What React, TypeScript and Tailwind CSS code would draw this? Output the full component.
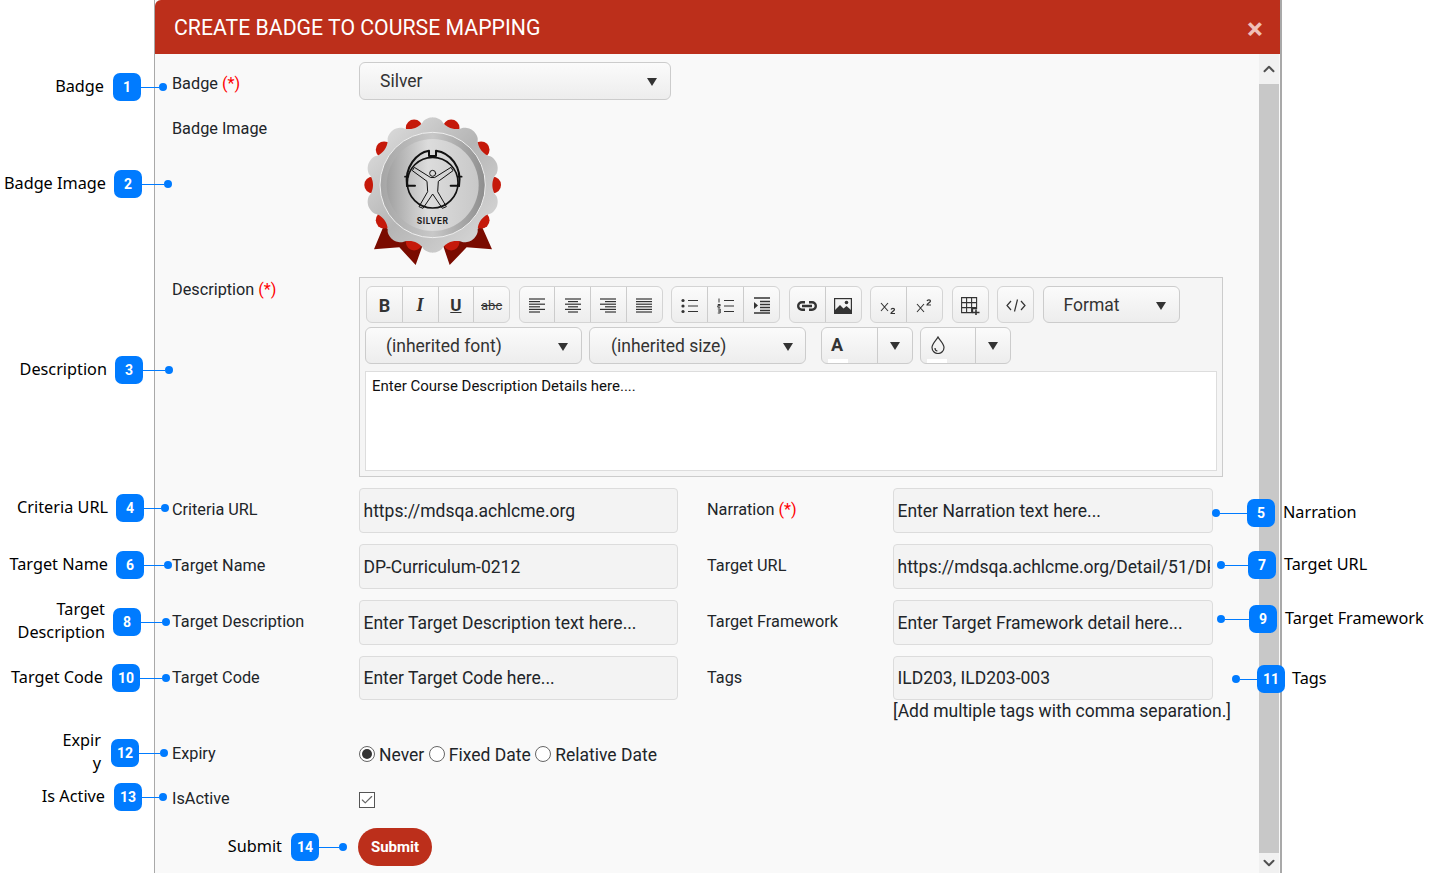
import { ReactNode } from "react";
import { Check, ChevronDown, ChevronUp } from "lucide-react";

const LABEL_FONT = "font-['Noto_Sans',sans-serif] text-[16.25px] leading-[23px] text-black";

// ---- callouts that sit over the form ----
type CalloutProps = {
    n: number
    label: ReactNode
    pos: string
    line: string
    gap: string
    side: "left" | "right"
}

const NumberBadge = ({ n }: { n: number }) => (
    <span className="flex h-7 w-7 shrink-0 items-center justify-center rounded-[7px] bg-[#007bff] text-[14px] font-bold text-white">{n}</span>
)

const Dot = () => <span className="h-2 w-2 shrink-0 rounded-full bg-[#007bff]" />

function Callout({ n, label, pos, line, gap, side }: CalloutProps) {
    const connector = <span className={`h-px shrink-0 bg-[#007bff] ${line}`} />
    const text = <span className={`${LABEL_FONT} ${gap} -mt-[2px] whitespace-nowrap`}>{label}</span>
    return (
        <div className={`absolute z-10 flex h-7 items-center ${pos}`}>
            {side === "left" ? (
                <>
                    {text}
                    <NumberBadge n={n} />
                    {connector}
                    <Dot />
                </>
            ) : (
                <>
                    <Dot />
                    {connector}
                    <NumberBadge n={n} />
                    {text}
                </>
            )}
        </div>
    )
}

const callouts: CalloutProps[] = [
    { n: 1, label: "Badge", pos: "right-[1265px] top-[73px]", line: "w-[18px]", gap: "mr-[9px]", side: "left" },
    { n: 2, label: "Badge Image", pos: "right-[1260px] top-[170px]", line: "w-[22px]", gap: "mr-[8px]", side: "left" },
    { n: 3, label: "Description", pos: "right-[1259px] top-[356px]", line: "w-[22px]", gap: "mr-[8px]", side: "left" },
    { n: 4, label: "Criteria URL", pos: "right-[1263px] top-[494px]", line: "w-[17px]", gap: "mr-[8px]", side: "left" },
    { n: 6, label: "Target Name", pos: "right-[1260px] top-[551px]", line: "w-[20px]", gap: "mr-[8px]", side: "left" },
    { n: 8, label: <span className="block text-right">Target<br />Description</span>, pos: "right-[1262px] top-[608px]", line: "w-[21px]", gap: "mr-[8px]", side: "left" },
    { n: 10, label: "Target Code", pos: "right-[1262px] top-[664px]", line: "w-[22px]", gap: "mr-[9px]", side: "left" },
    { n: 12, label: <span className="block text-right">Expir<br />y</span>, pos: "right-[1264px] top-[739px]", line: "w-[21px]", gap: "mr-[10px]", side: "left" },
    { n: 13, label: "Is Active", pos: "right-[1265px] top-[783px]", line: "w-[17px]", gap: "mr-[9px]", side: "left" },
    { n: 14, label: "Submit", pos: "right-[1085px] top-[833px]", line: "w-[20px]", gap: "mr-[9px]", side: "left" },
    { n: 5, label: "Narration", pos: "left-[1212px] top-[499px]", line: "w-[27px]", gap: "ml-[8px]", side: "right" },
    { n: 7, label: "Target URL", pos: "left-[1217px] top-[551px]", line: "w-[23px]", gap: "ml-[8px]", side: "right" },
    { n: 9, label: "Target Framework", pos: "left-[1217px] top-[605px]", line: "w-[24px]", gap: "ml-[8px]", side: "right" },
    { n: 11, label: "Tags", pos: "left-[1232px] top-[665px]", line: "w-[17px]", gap: "ml-[7px]", side: "right" },
]

// ---- the silver badge drawing, in 3x coordinates ----
const scallop = Array.from({ length: 360 }, (_, i) => {
    const a = (i * Math.PI) / 180
    const c = Math.cos(10 * a)
    const r = 191 + 12 * Math.sign(c) * Math.pow(Math.abs(c), 0.7)
    return `${(233 + r * Math.sin(a)).toFixed(1)},${(225 - r * Math.cos(a)).toFixed(1)}`
}).join(" ")

const redLobes = [18, 54, 90, 126, 162, 198, 234, 270, 306, 342].map((deg) => {
    const a = (deg * Math.PI) / 180
    return { cx: 233 + 180 * Math.sin(a), cy: 225 - 180 * Math.cos(a) }
})

function SilverBadge() {
    return (
        <svg viewBox="0 0 480 480" className="-mt-[6px] -ml-[4px] h-40 w-40">
            <defs>
                <linearGradient id="rim" x1="0" y1="0" x2="1" y2="1">
                    <stop offset="0" stopColor="#e4e4e4" />
                    <stop offset="0.5" stopColor="#b5b5b5" />
                    <stop offset="1" stopColor="#dedede" />
                </linearGradient>
                <linearGradient id="ring" x1="0" y1="0.5" x2="1" y2="0.5">
                    <stop offset="0" stopColor="#a5a5a5" />
                    <stop offset="0.5" stopColor="#c8c8c8" />
                    <stop offset="1" stopColor="#8d8d8d" />
                </linearGradient>
                <linearGradient id="disc" x1="0" y1="0.5" x2="1" y2="0.5">
                    <stop offset="0" stopColor="#a0a0a0" />
                    <stop offset="0.45" stopColor="#dcdcdc" />
                    <stop offset="1" stopColor="#c8c8c8" />
                </linearGradient>
            </defs>
            <polygon points="85,350 57,418 133,412 182,465 205,400" fill="#7a0b00" />
            <polygon points="381,350 411,418 335,412 284,465 262,400" fill="#7a0b00" />
            {redLobes.map((l, i) => <circle key={i} cx={l.cx} cy={l.cy} r="25" fill="#c5190a" />)}
            <polygon points={scallop} fill="url(#rim)" />
            <circle cx="233" cy="225" r="158" fill="url(#ring)" stroke="#efefef" strokeWidth="3" />
            <circle cx="233" cy="225" r="138" fill="url(#disc)" />
            <g fill="none" stroke="#111" strokeWidth="5" strokeLinejoin="round" strokeLinecap="round">
                <path d="M156 228 C148 170 185 128 222 122 L222 138 L243 138 L243 122 C285 128 322 170 312 228" strokeWidth="6" />
                <path d="M150 200 L160 200 M310 200 L320 200" />
                <circle cx="233" cy="218" r="76" />
                <path d="M157 227 H180 M287 227 H310" strokeWidth="6" />
                <circle cx="233" cy="190" r="9" strokeWidth="3" />
                <path d="M226 202 L178 172 L172 182 L216 214 L218 245 L192 290 L204 295 L233 252 L262 295 L274 290 L248 245 L250 214 L294 182 L288 172 L240 202 Z" strokeWidth="3" />
            </g>
            <text x="233" y="341" textAnchor="middle" fontFamily="Inter, sans-serif" fontWeight="700" fontSize="25" letterSpacing="1.5" fill="#1c1c1c">SILVER</text>
        </svg>
    )
}

// ---- toolbar ----
const Caret = () => (
    <svg viewBox="0 0 10 8" className="mt-px h-[8px] w-[10px] shrink-0" fill="#333"><path d="M0 0h10L5 8z" /></svg>
)

const BTN_BG = "bg-linear-to-b from-[#fbfbfb] to-[#ededed]"

function ToolGroup({ children, width }: { children: ReactNode, width: string }) {
    return <div className={`flex h-[37px] divide-x divide-[#ccc] rounded-md border border-[#d4d4d4] ${BTN_BG} ${width}`}>{children}</div>
}

const Tool = ({ children }: { children: ReactNode }) => (
    <span className="flex h-full flex-1 items-center justify-center pt-[2px] text-[#333]">{children}</span>
)

const Lines = ({ rows }: { rows: [number, number][] }) => (
    <svg viewBox="0 0 16 15" className="h-[15px] w-4" stroke="#333" strokeWidth="1.2">
        {rows.map(([x1, x2], i) => <line key={i} x1={x1} x2={x2} y1={1 + i * 2.6} y2={1 + i * 2.6} />)}
    </svg>
)

function SelectBox({ label, className }: { label: string, className: string }) {
    return (
        <div className={`flex items-center justify-between rounded-md border border-[#ccc] ${BTN_BG} ${className}`}>
            <span className="text-[#333]">{label}</span>
            <Caret />
        </div>
    )
}

function Toolbar() {
    return (
        <div className="flex flex-col">
            <div className="flex h-[37px] gap-[8.5px] pl-[6px]">
                <ToolGroup width="w-[144px]">
                    <Tool><span className="text-[18px] font-bold">B</span></Tool>
                    <Tool><span className="font-['Liberation_Serif',serif] text-[18px] font-bold italic">I</span></Tool>
                    <Tool><span className="text-[17px] font-bold underline">U</span></Tool>
                    <Tool><span className="text-[13px] line-through">abc</span></Tool>
                </ToolGroup>
                <ToolGroup width="w-[144px]">
                    <Tool><Lines rows={[[0, 16], [0, 11], [0, 16], [0, 11], [0, 16], [0, 11]]} /></Tool>
                    <Tool><Lines rows={[[0, 16], [3, 13], [0, 16], [3, 13], [0, 16], [3, 13]]} /></Tool>
                    <Tool><Lines rows={[[0, 16], [5, 16], [0, 16], [5, 16], [0, 16], [5, 16]]} /></Tool>
                    <Tool><Lines rows={[[0, 16], [0, 16], [0, 16], [0, 16], [0, 16], [0, 16]]} /></Tool>
                </ToolGroup>
                <ToolGroup width="w-[109px]">
                    <Tool>
                        <svg viewBox="0 0 18 16" className="h-4 w-[18px]" fill="#333" stroke="#333">
                            <circle cx="2" cy="2.5" r="1.6" stroke="none" /><circle cx="2" cy="8" r="1.6" stroke="none" /><circle cx="2" cy="13.5" r="1.6" stroke="none" />
                            <path d="M7 2.5h10M7 8h10M7 13.5h10" strokeWidth="1.2" />
                        </svg>
                    </Tool>
                    <Tool>
                        <svg viewBox="0 0 18 16" className="h-4 w-[18px]" stroke="#333">
                            <path d="M7 2.5h10M7 8h10M7 13.5h10" strokeWidth="1.2" />
                            <path d="M2 .5v4M.8 6.5h2.4v1.2H.8v1.5h2.4M.8 11h2.4v4H.8M1 13h2" strokeWidth="1" fill="none" />
                        </svg>
                    </Tool>
                    <Tool>
                        <svg viewBox="0 0 18 17" className="h-[17px] w-[18px]" fill="#333" stroke="#333">
                            <path d="M1 1h16M7 4.5h10M7 7.5h10M7 10.5h10M7 13.5h10M1 16h16" strokeWidth="1.3" />
                            <path d="M1 5l4 3.5-4 3.5z" stroke="none" />
                        </svg>
                    </Tool>
                </ToolGroup>
                <ToolGroup width="w-[73px]">
                    <Tool>
                        <svg viewBox="0 0 20 10" className="h-[10px] w-5" fill="none" stroke="#333" strokeWidth="2.4">
                            <path d="M8 1.2H5a3.8 3.8 0 0 0 0 7.6h3M12 1.2h3a3.8 3.8 0 0 1 0 7.6h-3M5 5h10" />
                        </svg>
                    </Tool>
                    <Tool>
                        <svg viewBox="0 0 18 16" className="h-4 w-[18px]">
                            <rect x="0.6" y="0.6" width="16.8" height="14.8" fill="none" stroke="#333" strokeWidth="1.2" />
                            <path d="M1 15V12l5-5 3.5 3.5L12.5 8l4.5 4v3z" fill="#333" />
                            <circle cx="12.5" cy="4.5" r="1.8" fill="#333" />
                        </svg>
                    </Tool>
                </ToolGroup>
                <ToolGroup width="w-[73px]">
                    <Tool>
                        <svg viewBox="0 0 18 14" className="mt-[3px] h-[14px] w-[18px]" fill="none" stroke="#333">
                            <path d="M1 3l7 8M8 3l-7 8" strokeWidth="1.1" />
                            <path d="M11 9.5c.5-1.5 3.5-1.5 3.5 0 0 1.5-3.5 2.5-3.5 4h4" strokeWidth="1.2" />
                        </svg>
                    </Tool>
                    <Tool>
                        <svg viewBox="0 0 18 14" className="h-[14px] w-[18px]" fill="none" stroke="#333">
                            <path d="M1 5l7 8M8 5l-7 8" strokeWidth="1.1" />
                            <path d="M11 2c.5-1.5 3.5-1.5 3.5 0 0 1.5-3.5 2.5-3.5 4h4" strokeWidth="1.2" />
                        </svg>
                    </Tool>
                </ToolGroup>
                <ToolGroup width="w-[37px]">
                    <Tool>
                        <svg viewBox="0 0 19 18" className="h-[18px] w-[19px]" fill="none" stroke="#333">
                            <path d="M.6.6h15v11h-4v4H.6zM5.6.6v15M10.6.6v15M.6 5.6h15M.6 10.6h15" strokeWidth="1.1" />
                            <path d="M11.5 15.5h7M15 12.5v5.5" strokeWidth="1.6" />
                        </svg>
                    </Tool>
                </ToolGroup>
                <ToolGroup width="w-[37px]">
                    <Tool>
                        <svg viewBox="0 0 20 13" className="h-[13px] w-5" fill="none" stroke="#333" strokeWidth="1.2">
                            <path d="M5 2 1 6.5 5 11M15 2l4 4.5-4 4.5M11.5 0.5 8.5 12.5" />
                        </svg>
                    </Tool>
                </ToolGroup>
                <SelectBox label="Format" className="h-[37px] w-[137px] pt-px pr-[13px] pl-[20px] text-[17.5px]" />
            </div>
            <div className="mt-[4px] flex h-[37px] pl-[5px]">
                <SelectBox label="(inherited font)" className="h-[37px] w-[217px] pt-px pr-[13px] pl-[20px] text-[17.5px]" />
                <SelectBox label="(inherited size)" className="ml-[7px] h-[37px] w-[217px] pt-px pr-[12px] pl-[21px] text-[17.5px]" />
                <div className={`ml-[15px] flex h-[37px] w-[92px] rounded-md border border-[#ccc] ${BTN_BG}`}>
                    <span className="relative flex w-[56px] items-center border-r border-[#ccc] pb-[2px] pl-[9px] text-[18px] font-bold text-[#333]">
                        A
                        <span className="absolute bottom-0 left-[6px] h-1 w-5 bg-white" />
                    </span>
                    <span className="flex flex-1 items-center justify-center"><Caret /></span>
                </div>
                <div className={`ml-[7px] flex h-[37px] w-[91px] rounded-md border border-[#ccc] ${BTN_BG}`}>
                    <span className="relative flex w-[55px] items-center border-r border-[#ccc] pb-[2px] pl-[10px]">
                        <svg viewBox="0 0 14 18" className="h-[18px] w-[14px]" fill="none" stroke="#333" strokeWidth="1.2">
                            <path d="M7 1C5.5 4 1 7.5 1 11.5a6 6 0 0 0 12 0C13 7.5 8.5 4 7 1z" />
                            <path d="M4 12c0 1.6 1 2.8 2.4 3" />
                        </svg>
                        <span className="absolute bottom-0 left-[6px] h-1 w-5 bg-white" />
                    </span>
                    <span className="flex flex-1 items-center justify-center"><Caret /></span>
                </div>
            </div>
        </div>
    )
}

// ---- form bits ----
const Req = () => <span className="text-[#ff0000]">(*)</span>

const FieldLabel = ({ children }: { children: ReactNode }) => (
    <span className="pt-[10px] text-[16.25px] leading-6 text-[#212529]">{children}</span>
)

const TextField = ({ value, className }: { value: string, className: string }) => (
    <input readOnly value={value} className={`w-full rounded-[4px] border border-[#dcdcdc] bg-[#f3f3f3] pr-[2px] pl-[3.5px] text-[17.5px] text-[#212529] outline-none ${className}`} />
)

function Radio({ label, checked }: { label: string, checked?: boolean }) {
    return (
        <label className="flex items-center gap-[4px]">
            <span className="-mt-[2px] flex h-4 w-4 items-center justify-center rounded-full border border-[#666] bg-white">
                {checked && <span className="h-[10px] w-[10px] rounded-full bg-[#333]" />}
            </span>
            <span>{label}</span>
        </label>
    )
}

export default function App() {
    return (
        <div className="relative h-[873px] w-[1432px] overflow-hidden bg-white font-['Roboto',sans-serif]">
            {callouts.map((c) => <Callout key={c.n} {...c} />)}

            <div className="ml-[154px] flex h-full w-[1128px] flex-col border-r-2 border-l border-[#a9a9a9] bg-[#f9f9f9]">
                <div className="flex h-[54px] shrink-0 items-center justify-between rounded-tl-md bg-[#bc2f1b] pr-[17px] pl-[19px]">
                    <h1 className="pt-[2px] text-[21.25px] font-normal text-white">CREATE BADGE TO COURSE MAPPING</h1>
                    <span className="pt-[3px] text-[30px] leading-none font-bold text-[#f0c0b8]">×</span>
                </div>

                <div className="flex min-h-0 flex-1">
                    <div className="min-w-0 flex-1 pt-[8px] pl-[17px]">
                        <div className="flex">
                            <span className="w-[187px] pt-[10px] text-[16.25px] leading-6 text-[#212529]">Badge <Req /></span>
                            <SelectBox label="Silver" className="h-[38px] w-[312px] pr-[13px] pl-[20px] text-[17.5px]" />
                        </div>

                        <div className="mt-[16px] flex h-[150px]">
                            <span className="w-[187px] pt-px text-[16.25px] leading-6 text-[#212529]">Badge Image</span>
                            <SilverBadge />
                        </div>

                        <div className="mt-[11px] flex">
                            <span className="w-[187px] pt-px text-[16.25px] leading-6 text-[#212529]">Description <Req /></span>
                            <div className="h-[200px] w-[864px] border border-[#ccc] bg-[#f5f5f5] pt-[8px]">
                                <Toolbar />
                                <div className="mx-[5px] mt-[7px] h-[100px] border border-[#ddd] bg-white px-[6px] py-[2px] text-[15px] leading-6 text-[#111]">
                                    Enter Course Description Details here....
                                </div>
                            </div>
                        </div>

                        <div className="mt-[11px] grid grid-cols-[187px_319px_29px_186px_320px] gap-y-[11px]">
                            <FieldLabel>Criteria URL</FieldLabel>
                            <TextField value="https://mdsqa.achlcme.org" className="h-[45px]" />
                            <span />
                            <FieldLabel>Narration <Req /></FieldLabel>
                            <TextField value="Enter Narration text here..." className="h-[45px]" />

                            <FieldLabel>Target Name</FieldLabel>
                            <TextField value="DP-Curriculum-0212" className="h-[45px]" />
                            <span />
                            <FieldLabel>Target URL</FieldLabel>
                            <TextField value="https://mdsqa.achlcme.org/Detail/51/DP-Curriculum-0212" className="h-[45px]" />

                            <FieldLabel>Target Description</FieldLabel>
                            <TextField value="Enter Target Description text here..." className="h-[45px]" />
                            <span />
                            <FieldLabel>Target Framework</FieldLabel>
                            <TextField value="Enter Target Framework detail here..." className="h-[45px]" />

                            <FieldLabel>Target Code</FieldLabel>
                            <TextField value="Enter Target Code here..." className="h-[44px]" />
                            <span />
                            <FieldLabel>Tags</FieldLabel>
                            <div className="flex flex-col">
                                <TextField value="ILD203, ILD203-003" className="h-[44px]" />
                                <span className="whitespace-nowrap text-[17.5px] leading-[22px] text-[#212529]">[Add multiple tags with comma separation.]</span>
                            </div>
                        </div>

                        <div className="mt-[20px] flex h-6 items-center">
                            <span className="w-[187px] text-[16.25px] text-[#212529]">Expiry</span>
                            <div className="flex items-center gap-[4.5px] pt-[2px] text-[17.5px] text-[#212529]">
                                <Radio label="Never" checked />
                                <Radio label="Fixed Date" />
                                <Radio label="Relative Date" />
                            </div>
                        </div>

                        <div className="mt-[21px] flex h-6 items-center">
                            <span className="w-[187px] text-[16.25px] text-[#212529]">IsActive</span>
                            <span className="mt-[2px] flex h-4 w-4 items-center justify-center border border-[#555] bg-white">
                                <Check size={14} color="#666" strokeWidth={2} />
                            </span>
                        </div>

                        <button className="mt-[17px] ml-[186px] h-[38px] w-[74px] rounded-full bg-[#bc2f1b] text-[15px] font-bold text-white">Submit</button>
                    </div>

                    <div className="mr-px flex w-[20px] shrink-0 flex-col items-center bg-[#f1f1f1]">
                        <span className="flex h-[30px] items-center"><ChevronUp size={18} color="#505050" strokeWidth={2.6} /></span>
                        <span className="w-full flex-1 bg-[#c8c8c8]" />
                        <span className="flex h-[20px] items-center"><ChevronDown size={18} color="#505050" strokeWidth={2.6} /></span>
                    </div>
                </div>
            </div>
        </div>
    )
}
